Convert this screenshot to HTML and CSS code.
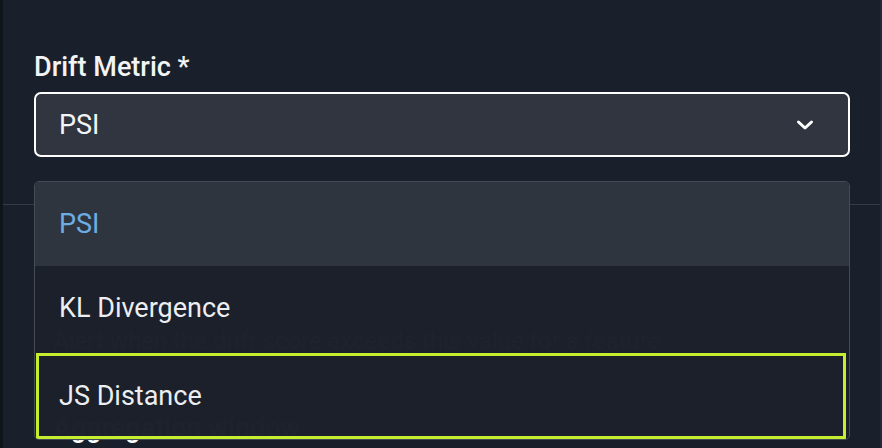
FILE: index.html
```html
<!DOCTYPE html>
<html lang="en">
<head>
<meta charset="utf-8">
<title>Drift Metric</title>
<link rel="stylesheet" href="styles.css">
</head>
<body>
<div class="page">
  <div class="field">
    <label class="label">Drift Metric *</label>
    <div class="select-wrap">
      <div class="select">
        <span class="select-value">PSI</span>
        <svg class="chevron" width="18" height="12" viewBox="0 0 18 12" aria-hidden="true">
          <path d="M2.5 3 L9 9 L15.5 3" fill="none" stroke="#ffffff" stroke-width="3" stroke-linecap="round" stroke-linejoin="round"/>
        </svg>
      </div>
      <ul class="menu">
        <li class="option selected">PSI</li>
        <li class="option">KL Divergence</li>
        <li class="option focused">JS Distance</li>
      </ul>
    </div>
  </div>
  <div class="divider"></div>
  <div class="section">
    <div class="bg-label">Threshold</div>
    <div class="bg-desc">Alert when the drift score exceeds this value for a feature</div>
    <div class="bg-label last">Aggregation window</div>
  </div>
</div>
</body>
</html>
```

FILE: styles.css
```css
* { box-sizing: border-box; }
html, body { margin: 0; padding: 0; }
body {
  background: #1a202b;
  font-family: Roboto, "Noto Sans", "Liberation Sans", sans-serif;
  width: 882px;
  height: 448px;
  overflow: hidden;
}
.page {
  height: 448px;
  border-left: 3px solid #10141b;
  border-right: 2px solid #222934;
  padding-top: 51px;
}
.field {
  padding: 0 30px 0 31px;
}
.label {
  display: block;
  color: #f2f3f5;
  font-size: 27px;
  font-weight: 500;
  line-height: 32px;
  margin-bottom: 9px;
}
.select-wrap {
  position: relative;
}
.select {
  height: 65px;
  background: #30353f;
  border: 2px solid #ffffff;
  border-radius: 7px;
  display: flex;
  align-items: center;
  justify-content: space-between;
  padding: 0 34px 0 23px;
}
.select-value {
  color: #f4f5f7;
  font-size: 27px;
  font-weight: 400;
}
.chevron { display: block; }
.menu {
  position: absolute;
  left: 0;
  right: 0;
  top: calc(100% + 24px);
  margin: 0;
  padding: 0;
  list-style: none;
  background: rgba(27, 32, 42, 0.993);
  border: 1px solid #454c57;
  border-radius: 5px;
  z-index: 2;
  overflow: hidden;
}
.option {
  height: 84px;
  display: flex;
  align-items: center;
  padding-left: 24px;
  color: #eceef1;
  font-size: 27px;
}
.option.selected {
  background: rgba(48, 54, 64, 0.99);
  color: #6caee3;
}
.option.focused {
  margin: 3px 3px 0 1px;
  height: 86px;
  outline: 3px solid #c5ee2f;
  outline-offset: -3px;
  padding-left: 23px;
}
.divider {
  height: 1px;
  background: #353c47;
  margin-top: 47px;
}
.section {
  padding: 32px 30px 0 50px;
}
.bg-label {
  color: #ffffff;
  font-size: 27px;
  font-weight: 500;
  line-height: 32px;
}
.bg-desc {
  color: #ffffff;
  font-size: 24px;
  line-height: 32px;
  margin-top: 56px;
}
.bg-label.last { margin-top: 55px; }
```
